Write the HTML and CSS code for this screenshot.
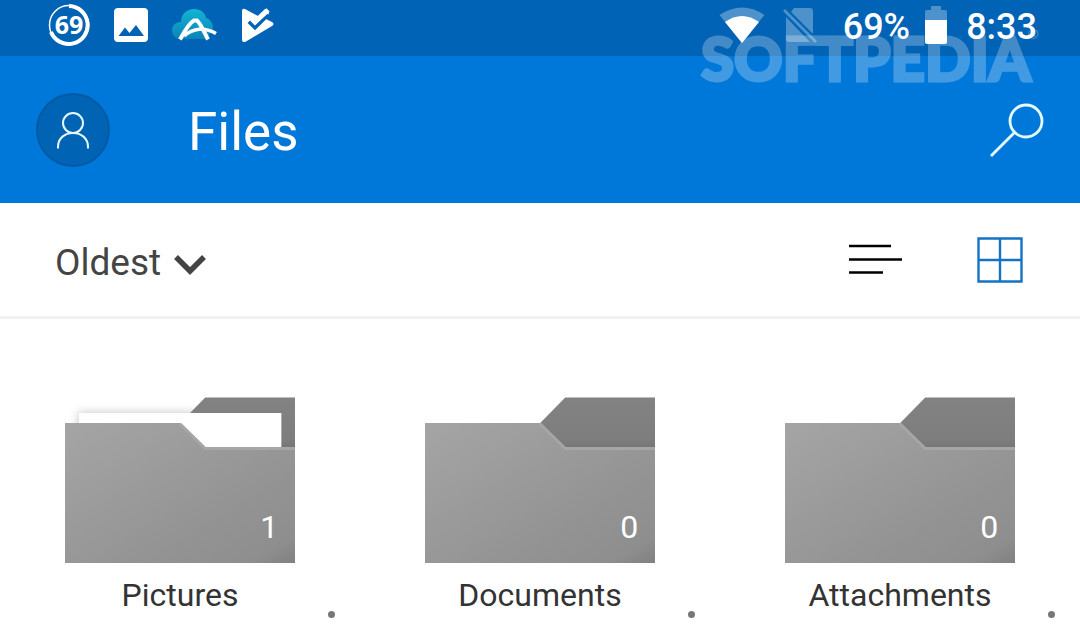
FILE: index.html
```html
<!DOCTYPE html>
<html lang="en">
<head>
  <meta charset="utf-8">
  <meta name="viewport" content="width=device-width, initial-scale=1">
  <title>Files</title>
  <link rel="stylesheet" href="styles.css">
</head>
<body>
  <!-- shared folder artwork -->
  <svg class="defs" aria-hidden="true">
    <defs>
      <linearGradient id="front" x1="0" y1="0" x2="1" y2="1">
        <stop offset="0" stop-color="#a5a5a5"/>
        <stop offset="0.6" stop-color="#959595"/>
        <stop offset="0.9" stop-color="#8e8e8e"/>
        <stop offset="1" stop-color="#808080"/>
      </linearGradient>
      <linearGradient id="back" x1="0" y1="0" x2="0" y2="1">
        <stop offset="0" stop-color="#828282"/>
        <stop offset="0.8" stop-color="#7e7e7e"/>
        <stop offset="1" stop-color="#757575"/>
      </linearGradient>
      <linearGradient id="cloud" x1="0" y1="0" x2="0" y2="1">
        <stop offset="0" stop-color="#12b5d4"/>
        <stop offset="1" stop-color="#0c83b8"/>
      </linearGradient>
      <filter id="paper-shadow" x="-20%" y="-40%" width="140%" height="180%">
        <feDropShadow dx="-1" dy="-1" stdDeviation="4" flood-color="#000" flood-opacity="0.2"/>
      </filter>
      <path id="folder-back" d="M115 26 140 0.5H230V52H140Z" fill="url(#back)"/>
      <g id="folder-front">
        <path d="M0 26H115L140 51H230V166H0Z" fill="url(#front)"/>
        <path d="M115 27 140 51.500H230" fill="none" stroke="#a6a6a6" stroke-width="3"/>
      </g>
    </defs>
  </svg>

  <div class="status-bar">
    <div class="status-group notifications">
      <svg width="42" height="42" viewBox="0 0 42 42">
        <circle cx="21" cy="21" r="19.500" fill="none" stroke="#fff" stroke-width="1.500"/>
        <path d="M21 2A19 19 0 1 1 3 28" fill="none" stroke="#fff" stroke-width="4"/>
        <text class="ring-text" x="21" y="30" text-anchor="middle">69</text>
      </svg>
      <svg width="34" height="36" viewBox="0 0 34 36">
        <path fill="#fff" fill-rule="evenodd" d="M4 1H30Q34 1 34 5V31Q34 35 30 35H4Q0 35 0 31V5Q0 1 4 1ZM4.500 29H30L22 18 15.500 26 11 20.500Z"/>
      </svg>
      <svg width="45" height="36" viewBox="0 0 45 36">
        <path fill="url(#cloud)" d="M7 32C2 31 0 27 0 23 0 18 4 15 9 15 9 7 15 2 22 2 29 2 33 6 34 11 38 12 41 16 41 21L35 32Z"/>
        <path d="M8 32.500C12 25 17 16 22 13.500H25C29 17 32 25 36 32.500" fill="none" stroke="#fff" stroke-width="4"/>
        <path d="M12 29C21 21 33 20 44 26.500" fill="none" stroke="#fff" stroke-width="3.500"/>
      </svg>
      <svg width="34" height="36" viewBox="0 0 34 36">
        <path fill="#fff" d="M1 4Q1 1 4 2L17 9 23 3Q25 1 27 3T27 8L25 12 31 15Q34 17 31 19L5 34.500Q1 36 1 33Z"/>
        <path d="M8 14.500 14 20.500 27 7.500" fill="none" stroke="#0063b5" stroke-width="4"/>
        <path d="M9 10 14 15 27 3" fill="none" stroke="#fff" stroke-width="5"/>
      </svg>
    </div>
    <div class="status-group system">
      <svg width="46" height="36" viewBox="0 0 46 36">
        <path fill="#4d92cb" d="M0.500 8Q23-7 45.500 8L23 36Z"/>
        <path fill="#fff" d="M6 15Q23 3 40 15L23 36Z"/>
      </svg>
      <svg width="36" height="38" viewBox="0 0 36 38">
        <path fill="#4d92cb" d="M11 2H27Q30 2 30 5V28L8 6ZM3 11 27 36H6Q3 36 3 33Z"/>
        <path d="M1 4 33 36" stroke="#4d92cb" stroke-width="3"/>
      </svg>
      <span class="level">69%</span>
      <svg width="24" height="40" viewBox="0 0 24 40">
        <path fill="#4d92cb" d="M7 1H17V5H21Q23 5 23 7V16H1V7Q1 5 3 5H7Z"/>
        <path fill="#fff" d="M1 15H23V37Q23 39 21 39H3Q1 39 1 37Z"/>
      </svg>
      <span class="clock">8:33</span>
    </div>
    <div class="watermark">SOFTPEDIA<sup>®</sup></div>
  </div>

  <header class="app-bar">
    <button class="avatar" type="button" aria-label="Account">
      <svg width="34" height="40" viewBox="0 0 34 40" fill="none" stroke="#e4f8ff" stroke-width="2">
        <circle cx="17" cy="13" r="10"/>
        <path d="M2 38.500V37C2 28 9 23 17 23S32 28 32 37V38.500"/>
      </svg>
    </button>
    <h1>Files</h1>
    <button class="icon-button" type="button" aria-label="Search">
      <svg width="54" height="54" viewBox="0 0 54 54" fill="none" stroke="#e4fbff" stroke-width="2.800">
        <circle cx="36" cy="18" r="16"/>
        <path d="M25 29 1 53"/>
      </svg>
    </button>
  </header>

  <div class="toolbar">
    <div class="sort">
      <select aria-label="Sort by">
        <option>Oldest</option>
        <option>Newest</option>
      </select>
      <svg class="chevron" width="32" height="22" viewBox="0 0 32 22">
        <path d="M2 3 16 17 30 3" fill="none" stroke="#444" stroke-width="5.500"/>
      </svg>
    </div>
    <div class="views">
      <button class="icon-button" type="button" aria-label="List view">
        <svg width="54" height="46" viewBox="0 0 54 46" stroke="#000" stroke-width="2.600">
          <path d="M0 9H42M0 22.500H53M0 35.500H34"/>
        </svg>
      </button>
      <button class="icon-button" type="button" aria-label="Grid view">
        <svg width="46" height="46" viewBox="0 0 46 46" fill="none" stroke="#1473c5" stroke-width="2.400">
          <path d="M1.500 1.500H44.500V44.500H1.500ZM23 1.500V44.500M1.500 23H44.500"/>
        </svg>
      </button>
    </div>
  </div>

  <main class="folders">
    <div class="folder">
      <div class="folder-icon">
        <svg viewBox="0 0 230 166">
          <path d="M14 16H190V60H14Z" fill="#fff" filter="url(#paper-shadow)"/>
          <use href="#folder-back"/>
          <path d="M14 16H216V60H14Z" fill="#fff"/>
          <use href="#folder-front"/>
        </svg>
        <span class="count">1</span>
      </div>
      <div class="name">Pictures</div>
      <button class="more" type="button" aria-label="More options for Pictures"><i></i><i></i><i></i></button>
    </div>
    <div class="folder">
      <div class="folder-icon">
        <svg viewBox="0 0 230 166">
          <use href="#folder-back"/>
          <use href="#folder-front"/>
        </svg>
        <span class="count">0</span>
      </div>
      <div class="name">Documents</div>
      <button class="more" type="button" aria-label="More options for Documents"><i></i><i></i><i></i></button>
    </div>
    <div class="folder">
      <div class="folder-icon">
        <svg viewBox="0 0 230 166">
          <use href="#folder-back"/>
          <use href="#folder-front"/>
        </svg>
        <span class="count">0</span>
      </div>
      <div class="name">Attachments</div>
      <button class="more" type="button" aria-label="More options for Attachments"><i></i><i></i><i></i></button>
    </div>
  </main>
</body>
</html>
```

FILE: styles.css
```css
* {
  box-sizing: border-box;
}
body {
  margin: 0;
  height: 100vh;
  overflow: hidden;
  display: flex;
  flex-direction: column;
  background: #fff;
  font-family: Roboto, "Liberation Sans", sans-serif;
  color: #333;
}
svg {
  display: block;
  flex: none;
}
button {
  border: none;
  padding: 0;
  background: none;
  cursor: pointer;
}
.defs {
  position: absolute;
  width: 0;
  height: 0;
}

/* status bar */
.status-bar {
  position: relative;
  flex: none;
  display: flex;
  justify-content: space-between;
  height: 56px;
  padding: 0 43px 6px 48px;
  background: #0063b5;
  color: #fff;
  font-size: 36px;
  font-weight: 500;
  line-height: 48px;
}
.status-group {
  display: flex;
  align-items: center;
}
.notifications {
  gap: 24px;
}
.system {
  gap: 18px;
}
.level,
.clock {
  padding-top: 3px;
}
.level {
  margin-left: 6px;
}
.level + svg {
  margin-left: -4px;
}
.ring-text {
  font: 700 25px "Open Sans", sans-serif;
  fill: #fff;
}
.watermark {
  position: absolute;
  top: 26px;
  right: 49px;
  z-index: 1;
  color: #fff;
  font: 900 60px/64px Lato, sans-serif;
  -webkit-text-stroke: 3px #fff;
  opacity: 0.26;
  pointer-events: none;
}
.watermark sup {
  position: absolute;
  top: 0;
  right: -8px;
  font-size: 14px;
  line-height: 16px;
  -webkit-text-stroke: 0;
}

/* app bar */
.app-bar {
  flex: none;
  display: flex;
  align-items: center;
  height: 147px;
  padding: 0 36px;
  background: #0078d9;
  color: #fff;
}
.avatar {
  display: flex;
  align-items: center;
  justify-content: center;
  width: 74px;
  height: 74px;
  border: 2px solid #005ba7;
  border-radius: 50%;
  background: #0063b3;
}
h1 {
  flex: 1;
  margin: 0 0 0 78px;
  padding-top: 4px;
  font-size: 53px;
  font-weight: 400;
}

/* sort and view switch */
.toolbar {
  flex: none;
  display: flex;
  align-items: center;
  justify-content: space-between;
  height: 116px;
  padding: 0 57px 0 54px;
  border-bottom: 3px solid #f2f2f2;
}
.sort {
  position: relative;
}
.sort select {
  appearance: none;
  width: 156px;
  padding: 6px 0 0 1px;
  border: none;
  background: none;
  color: #444;
  font: 400 37px/48px Roboto, sans-serif;
  cursor: pointer;
}
.chevron {
  position: absolute;
  top: 21px;
  right: 4px;
  pointer-events: none;
}
.views {
  display: flex;
  gap: 74px;
}

/* folders */
.folders {
  display: grid;
  grid-template-columns: repeat(3, 1fr);
  padding-top: 78px;
}
.folder {
  display: grid;
  justify-items: center;
}
.folder-icon {
  position: relative;
  width: 64%;
}
.folder-icon svg {
  width: 100%;
}
.count {
  position: absolute;
  right: 17px;
  bottom: 16px;
  color: #fff;
  font-size: 32px;
  line-height: 40px;
}
.name {
  padding-top: 12px;
  font-size: 32px;
  line-height: 40px;
}
.more {
  justify-self: end;
  display: grid;
  gap: 12px;
  margin-top: -4px;
  margin-right: 25px;
}
.more i {
  width: 7px;
  height: 7px;
  border-radius: 50%;
  background: #777;
}
```
